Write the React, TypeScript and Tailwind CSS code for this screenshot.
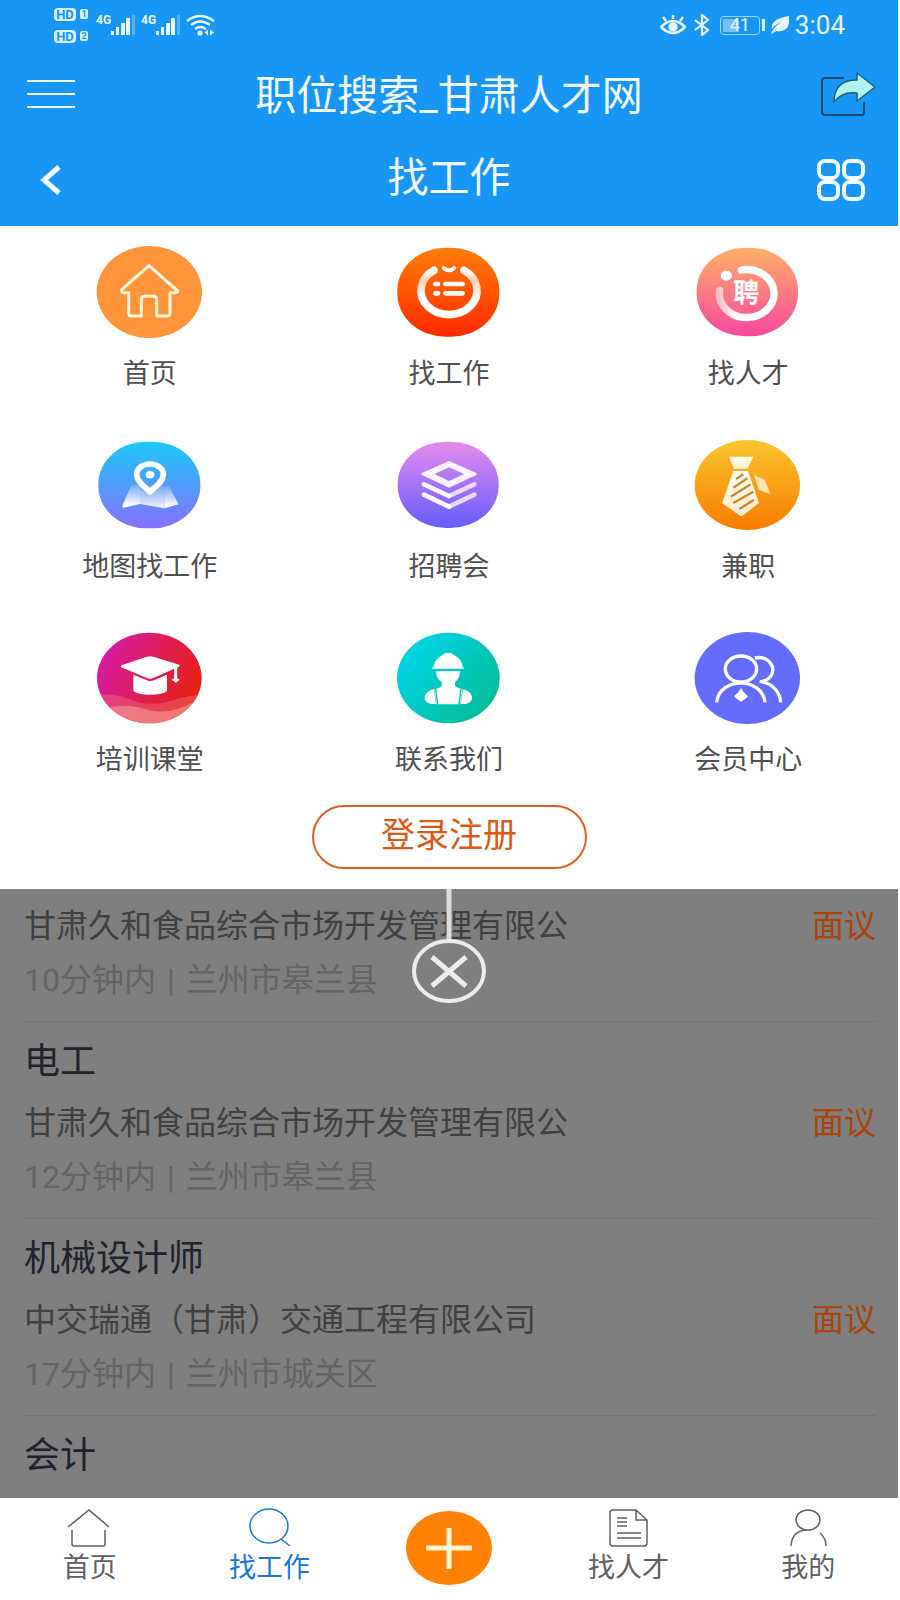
import React from 'react';

const MenuIcon = ({ children }: { children: React.ReactNode }) => (
  <svg className="w-[110px] h-24" viewBox="-163 -144 330 288" fill="none" aria-hidden="true">
    {children}
  </svg>
);

const Gradient = ({ id, from, to, diagonal }: { id: string; from: string; to: string; diagonal?: boolean }) => (
  <linearGradient id={id} x1="0" y1="0" x2={diagonal ? '1' : '0'} y2={diagonal ? '0.7' : '1'}>
    <stop offset="0" stopColor={from} />
    <stop offset="1" stopColor={to} />
  </linearGradient>
);

const HomeBadge = () => (
  <MenuIcon>
    <ellipse rx="158" ry="138" fill="#ff953a" />
    <path
      d="M-1-79-82-8Q-86 1-76 2H-62V64Q-62 72-54 72H-24V22Q-24 13-14 13H12Q22 13 22 22V72H52Q62 72 62 64V2H76Q90 1 82-6Z"
      stroke="#fff6dc"
      strokeWidth="9"
      strokeLinejoin="round"
    />
  </MenuIcon>
);

const JobBadge = () => (
  <MenuIcon>
    <defs>
      <Gradient id="job" from="#ff7d05" to="#ff2a00" />
      <linearGradient id="jobRing" x1="0" y1="0" x2="0" y2="1">
        <stop offset="0" stopColor="#fff" />
        <stop offset="0.25" stopColor="#fff" stopOpacity="0.7" />
        <stop offset="0.6" stopColor="#fff" />
      </linearGradient>
    </defs>
    <rect x="-153" y="-133" width="306" height="267" rx="146" ry="128" fill="url(#job)" />
    <path d="M-43-65A84 72 0 1 0 47-65" stroke="url(#jobRing)" strokeWidth="23" strokeLinecap="round" />
    <path d="M-14-72Q2-58 18-72" stroke="#fff" strokeWidth="11" strokeLinecap="round" />
    <path d="M-39-24H-31M-39 4H-31M-9-24H43M-9 4H43" stroke="#fff" strokeWidth="14" strokeLinecap="round" />
  </MenuIcon>
);

const TalentBadge = () => (
  <MenuIcon>
    <defs>
      <Gradient id="talent" from="#ffb066" to="#f7489f" />
      <linearGradient id="talentRing" x1="0" y1="0" x2="1" y2="0">
        <stop offset="0" stopColor="#fff" stopOpacity="0.55" />
        <stop offset="0.3" stopColor="#fff" />
      </linearGradient>
    </defs>
    <rect x="-152" y="-133" width="304" height="266" rx="145" ry="128" fill="url(#talent)" />
    <path d="M-18-66A82 72 0 1 1-83-6" stroke="url(#talentRing)" strokeWidth="22" strokeLinecap="round" />
    <ellipse cx="-63" cy="-49" rx="17" ry="15" fill="#fff" />
    <text x="-3" y="31" textAnchor="middle" fill="#fff" fontSize="78" fontWeight="700">聘</text>
  </MenuIcon>
);

const MapBadge = () => (
  <MenuIcon>
    <defs>
      <Gradient id="map" from="#1cc9f8" to="#8570ff" />
      <linearGradient id="mapSheet" x1="0" y1="0" x2="0" y2="1">
        <stop offset="0" stopColor="#fff" stopOpacity="0.15" />
        <stop offset="0.9" stopColor="#fff" />
      </linearGradient>
    </defs>
    <rect x="-153" y="-130" width="306" height="260" rx="145" ry="126" fill="url(#map)" />
    <path d="M-55 2-28-2V57L-78 68Q-83 67-80 60Z" fill="url(#mapSheet)" />
    <path d="M-28 0 45 4V70L-28 57Z" fill="url(#mapSheet)" opacity="0.85" />
    <path d="M45 2H58L88 58 45 70Z" fill="url(#mapSheet)" />
    <path d="M2 21C-14 4-38-8-38-32A40 31 0 0 1 42-32C42-8 18 4 2 21Z" stroke="#fff" strokeWidth="17" strokeLinejoin="round" />
    <ellipse cx="2" cy="-31" rx="13" ry="11" fill="#fff" />
  </MenuIcon>
);

const FairBadge = () => (
  <MenuIcon>
    <defs>
      <Gradient id="fair" from="#e58bec" to="#665cff" />
    </defs>
    <rect x="-152" y="-130" width="303" height="259" rx="145" ry="126" fill="url(#fair)" />
    <path
      d="M2-72 82-37Q89-33 82-29L2 8-78-29Q-85-33-78-37ZM2-53-42-33 2-12 47-33Z"
      fill="#fff"
      fillOpacity="0.92"
      fillRule="evenodd"
    />
    <path d="M-73-2 2 33M-73 29 2 65" stroke="#fff" strokeWidth="14" strokeLinecap="round" />
    <path d="M78-2 2 33M78 29 2 65" stroke="#fff" strokeOpacity="0.75" strokeWidth="14" strokeLinecap="round" />
  </MenuIcon>
);

const PartTimeBadge = () => (
  <MenuIcon>
    <defs>
      <Gradient id="part" from="#f9c62e" to="#f87b00" />
      <Gradient id="tie" from="#fffdf2" to="#ffeccb" />
    </defs>
    <ellipse rx="158" ry="135" fill="url(#part)" />
    <path d="M20-30 52-16 70 28 34 14Z" fill="#ffe3ac" />
    <path d="M-55-85H18L0-49H-40Z" fill="url(#tie)" />
    <path d="M-42-42H2L35 54-14 92Q-19 94-24 91L-76 54Z" fill="url(#tie)" />
    <path d="M-34-18-12-32M-42 8 0-20M-50 35 10-2M-42 54 18 20M-24 72 20 44" stroke="#c98a35" strokeWidth="7" />
  </MenuIcon>
);

const TrainingBadge = () => (
  <MenuIcon>
    <defs>
      <linearGradient id="train" x1="0" y1="0.2" x2="1" y2="0.6">
        <stop offset="0" stopColor="#d41bb0" />
        <stop offset="0.55" stopColor="#df1c52" />
        <stop offset="1" stopColor="#e62010" />
      </linearGradient>
      <clipPath id="trainClip">
        <ellipse rx="157" ry="136" />
      </clipPath>
    </defs>
    <g clipPath="url(#trainClip)">
      <rect x="-160" y="-140" width="320" height="280" fill="url(#train)" />
      <path d="M-160 50Q-110 44-55 65T50 72T160 46V140H-160Z" fill="#f07a80" fillOpacity="0.4" />
      <path d="M-160 98Q-80 70-10 94T160 58V140H-160Z" fill="#f5a59a" fillOpacity="0.55" />
    </g>
    <path d="M-84-38-8-64Q2-67 12-64L90-40Q94-36 88-34L12 0Q4 4-6 1L-84-32Q-88-35-84-38Z" fill="#fff" />
    <path d="M-48-10-4 8Q4 11 14 7L53-10V38C40 54-34 54-48 38Z" fill="#fff" />
    <path d="M79-36V2" stroke="#fff" strokeWidth="9" />
    <path d="M79-2 91 5 80 14 67 5Z" fill="#fff" />
  </MenuIcon>
);

const ContactBadge = () => (
  <MenuIcon>
    <defs>
      <Gradient id="contact" from="#00d9f5" to="#02bd98" diagonal />
    </defs>
    <ellipse rx="154" ry="136" fill="url(#contact)" />
    <path d="M-50-28Q-46-31-43-38C-40-60-18-67-8-75H8C20-66 40-58 42-38Q44-31 48-28Z" fill="#fff" />
    <path d="M-36-21H34C35-2 28 6 20 12V24Q26 30 42 33L36 79H-36L-42 33Q-24 30-20 24V12C-30 4-37-2-36-21Z" fill="#fff" />
    <path d="M-44 34-37 78C-58 80-71 72-71 60C-71 48-60 38-44 34ZM44 34 37 78C58 80 71 72 71 60C71 48 60 38 44 34Z" fill="#fff" />
    <path d="M-38 32-32 80M38 32 32 80" stroke="#08bfa8" strokeWidth="4" />
  </MenuIcon>
);

const MemberBadge = () => (
  <MenuIcon>
    <ellipse rx="158" ry="138" fill="#656cfc" />
    <g stroke="#fff" strokeWidth="10">
      <ellipse cx="-19" cy="-27" rx="47" ry="39" />
      <path d="M-92 73C-84-4 44-4 53 73" />
      <path d="M23-60C62-68 78-38 76-22C75-4 60 8 41 11C78 16 98 44 100 73" strokeLinejoin="round" />
    </g>
    <path d="M-19 29Q-13 44 2 55Q-8 66-19 71Q-30 66-40 55Q-25 44-19 29Z" fill="#fff" />
  </MenuIcon>
);

const menuItems = [
  { label: '首页', icon: <HomeBadge /> },
  { label: '找工作', icon: <JobBadge /> },
  { label: '找人才', icon: <TalentBadge /> },
  { label: '地图找工作', icon: <MapBadge /> },
  { label: '招聘会', icon: <FairBadge /> },
  { label: '兼职', icon: <PartTimeBadge /> },
  { label: '培训课堂', icon: <TrainingBadge /> },
  { label: '联系我们', icon: <ContactBadge /> },
  { label: '会员中心', icon: <MemberBadge /> },
];

const jobs = [
  { title: '', company: '甘肃久和食品综合市场开发管理有限公', time: '10分钟内', area: '兰州市皋兰县' },
  { title: '电工', company: '甘肃久和食品综合市场开发管理有限公', time: '12分钟内', area: '兰州市皋兰县' },
  { title: '机械设计师', company: '中交瑞通（甘肃）交通工程有限公司', time: '17分钟内', area: '兰州市城关区' },
];

const HdMark = ({ sim }: { sim: string }) => (
  <span className="flex items-center gap-1 h-[14px]">
    <span className="flex items-center justify-center w-[22px] h-[13px] rounded-sm bg-[#d9f1ff] text-[#1796f5] text-[13px] leading-none font-bold">HD</span>
    <span className="flex items-center justify-center w-2 h-[10px] rounded-xs bg-[#d9f1ff] text-[#1796f5] text-[9px] leading-none font-bold">{sim}</span>
  </span>
);

const Signal = () => (
  <span className="flex items-start">
    <span className="text-[12px] leading-[12px] font-bold">4G</span>
    <svg className="w-[26px] h-[22px]" viewBox="0 0 26 22" aria-hidden="true">
      <path d="M0 17h3v4H0zM5 13h3v8H5zM10 9h4v12h-4zM15 4h4v17h-4z" fill="#e6f6ff" />
      <path d="M21 1h3v20h-3z" fill="#e6f6ff" opacity="0.3" />
    </svg>
  </span>
);

const StatusBar = () => (
  <div className="flex items-center justify-between h-[50px] pl-[54px] pr-[53px] text-[#e6f6ff]">
    <div className="flex items-center">
      <div className="flex flex-col gap-2 mr-2">
        <HdMark sim="1" />
        <HdMark sim="2" />
      </div>
      <div className="flex gap-1">
        <Signal />
        <Signal />
      </div>
      <svg className="w-[30px] h-[22px] ml-1" viewBox="0 0 30 22" fill="none" aria-hidden="true">
        <path d="M1 7Q14-3 28 7M5 11Q14 4 24 11M9 15Q14 11 20 15" stroke="#e6f6ff" strokeWidth="2.4" />
        <circle cx="14" cy="19" r="2.6" fill="#e6f6ff" />
        <path d="M22 15.500 18.500 18.500 22 21.500ZM24 15.500 28 18.500 24 21.500Z" fill="#e6f6ff" />
      </svg>
    </div>
    <div className="flex items-center">
      <svg className="w-[26px] h-[22px]" viewBox="0 0 26 22" fill="none" stroke="#e6f6ff" strokeWidth="2.5" aria-hidden="true">
        <path d="M1 13Q13 1 25 13Q13 25 1 13ZM13 5V1M6 7 3 3M20 7 23 3" />
        <circle cx="13" cy="13" r="3.500" fill="#e6f6ff" />
      </svg>
      <svg className="w-4 h-[22px] ml-2" viewBox="0 0 16 22" fill="none" stroke="#e6f6ff" strokeWidth="2.2" aria-hidden="true">
        <path d="M1 6 14 16 8 21V1L14 6 1 16" />
      </svg>
      <span className="relative flex items-center justify-center w-10 h-[19px] ml-2.5 border border-[#9fd6ff] rounded-sm text-[18px] leading-none">
        <span className="absolute left-0.5 top-0.5 bottom-0.5 w-4 bg-[#74c0fb]"></span>
        <span className="relative">41</span>
      </span>
      <span className="w-[3px] h-3 ml-0.5 bg-[#d9f1ff]"></span>
      <svg className="w-[18px] h-[18px] ml-1.5" viewBox="0 0 18 18" aria-hidden="true">
        <path d="M18 0Q20 17 5 15L2 17 0 18Q2 11 11 6Q3 9 1 13Q-1 3 18 0Z" fill="#e6f6ff" />
      </svg>
      <span className="ml-1.5 font-[Roboto] text-[26px] leading-[28px]">3:04</span>
    </div>
  </div>
);

const Header = () => (
  <header className="bg-[#1796f5] text-[#f0faff]">
    <StatusBar />
    <div className="flex items-center justify-between h-[88px] px-[22px]">
      <button type="button" aria-label="菜单" className="flex flex-col justify-between w-[58px] h-7 px-[5px]">
        <span className="w-full h-0.5 bg-[#f0faff]"></span>
        <span className="w-full h-0.5 bg-[#f0faff]"></span>
        <span className="w-full h-0.5 bg-[#f0faff]"></span>
      </button>
      <h1 className="pt-1 text-[41px] leading-[48px]">职位搜索_甘肃人才网</h1>
      <button type="button" aria-label="分享" className="w-[58px]">
        <svg className="w-[58px] h-[46px]" viewBox="0 0 58 46" fill="none" aria-hidden="true">
          <path d="M26 7H7Q4 7 4 10V41Q4 44 7 44H44Q46 44 46 41V31" stroke="#20456b" strokeWidth="2" />
          <path d="M39 2 57 16 39 30V22Q24 20 16 31Q16 9 39 9Z" fill="#b0f3ee" stroke="#1f5f7d" strokeWidth="1.500" strokeLinejoin="round" />
        </svg>
      </button>
    </div>
    <div className="flex items-center justify-between h-[88px] pl-[26px] pr-8 pb-1">
      <button type="button" aria-label="返回" className="w-14 pl-3">
        <svg className="w-6 h-8" viewBox="0 0 24 32" fill="none" aria-hidden="true">
          <path d="M21 3 6 16 21 29" stroke="#f0faff" strokeWidth="5" />
        </svg>
      </button>
      <h2 className="pb-1 text-[41px] leading-[48px]">找工作</h2>
      <button type="button" aria-label="更多" className="w-[50px]">
        <svg className="w-[50px] h-11" viewBox="0 0 50 44" fill="none" stroke="#f0faff" strokeWidth="4" aria-hidden="true">
          <rect x="3" y="3" width="19" height="17" rx="6" />
          <rect x="28" y="3" width="19" height="17" rx="6" />
          <rect x="3" y="24" width="19" height="17" rx="6" />
          <rect x="28" y="24" width="19" height="17" rx="6" />
        </svg>
      </button>
    </div>
  </header>
);

const MenuSheet = () => (
  <section className="bg-white pt-[18px] pb-5">
    <nav className="grid grid-cols-3">
      {menuItems.map((item) => (
        <a key={item.label} href="#" className="flex flex-col items-center h-[193px] text-[#505050]">
          {item.icon}
          <span className="mt-4 text-[27px] leading-9">{item.label}</span>
        </a>
      ))}
    </nav>
    <div className="flex justify-center -mt-[18px]">
      <button type="button" className="w-[275px] h-16 pb-1 rounded-full border-2 border-[#dc5f22] text-[#dc5a18] text-[34px] leading-[40px]">
        登录注册
      </button>
    </div>
  </section>
);

const JobList = () => (
  <main className="relative flex-1 bg-[#7f7f7f] pl-6 pr-[22px]">
    {jobs.map((job) => (
      <article key={job.time} className="border-b border-[#747474] pb-5">
        {job.title && <h3 className="pt-4 text-[36px] leading-[48px] text-[#20232c]">{job.title}</h3>}
        <div className="flex justify-between pt-4 text-[32px] leading-[42px]">
          <p className="text-[#404040]">{job.company}</p>
          <span className="text-[#a8440c]">面议</span>
        </div>
        <p className="pt-3 text-[32px] leading-[42px] text-[#646464]">
          {job.time} <span className="mx-[3px]">|</span> {job.area}
        </p>
      </article>
    ))}
    <h3 className="pt-4 text-[36px] leading-[48px] text-[#20232c]">会计</h3>

    {/* Close handle hanging from the menu */}
    <button type="button" aria-label="关闭" className="absolute top-0 left-1/2 -translate-x-1/2">
      <svg className="w-[76px] h-[116px]" viewBox="0 0 76 116" fill="none" stroke="#ececec" aria-hidden="true">
        <path d="M38 0V51" stroke="#dcdcdc" strokeWidth="5" />
        <ellipse cx="38" cy="82" rx="35" ry="30" strokeWidth="4" />
        <path d="M21 68 55 97M55 68 21 97" strokeWidth="5" />
      </svg>
    </button>
  </main>
);

const tabs = [
  {
    label: '首页',
    active: false,
    icon: <path d="M1 21 22 4 42 21M5 24V38Q5 40 7 40H36Q38 40 38 38V24" />,
  },
  {
    label: '找工作',
    active: true,
    icon: (
      <>
        <ellipse cx="22" cy="20" rx="19" ry="17" />
        <path d="M34 33 43 40" />
      </>
    ),
  },
  {
    label: '找人才',
    active: false,
    icon: (
      <>
        <path d="M30 4H7Q4 4 4 7V37Q4 40 7 40H38Q41 40 41 37V14ZM30 4V14H41" />
        <path d="M11 12H21M11 16H21M11 20H21M11 27H35M11 32H35" />
      </>
    ),
  },
  {
    label: '我的',
    active: false,
    icon: (
      <>
        <ellipse cx="22" cy="14" rx="12" ry="10" />
        <path d="M5 40Q6 25 20 24M34 27Q40 32 40 40" />
      </>
    ),
  },
];

const Tab = ({ tab }: { tab: (typeof tabs)[number] }) => (
  <a href="#" className={`flex flex-col items-center ${tab.active ? 'text-[#1576e0]' : 'text-[#606060]'}`}>
    <svg className="w-[45px] h-11" viewBox="0 0 45 44" fill="none" stroke="currentColor" strokeWidth="1.500" aria-hidden="true">
      {tab.icon}
    </svg>
    <span className="text-[27px] leading-9">{tab.label}</span>
  </a>
);

const TabBar = () => (
  <nav className="grid grid-cols-5 h-[102px] pt-2 bg-white">
    <Tab tab={tabs[0]} />
    <Tab tab={tabs[1]} />
    <button type="button" aria-label="发布" className="flex justify-center pt-1">
      <svg className="w-[86px] h-[76px]" viewBox="0 0 86 76" aria-hidden="true">
        <ellipse cx="43" cy="38" rx="43" ry="37" fill="#ff8103" />
        <path d="M20 38H66M43 18V59" stroke="#fff3d6" strokeWidth="5" />
      </svg>
    </button>
    <Tab tab={tabs[2]} />
    <Tab tab={tabs[3]} />
  </nav>
);

const App = () => {
  return (
    <div className="min-h-screen flex flex-col bg-white pr-0.5 font-['Roboto','Noto_Sans_CJK_SC',sans-serif]">
      <Header />
      <MenuSheet />
      <JobList />
      <TabBar />
    </div>
  );
};

export default App;
